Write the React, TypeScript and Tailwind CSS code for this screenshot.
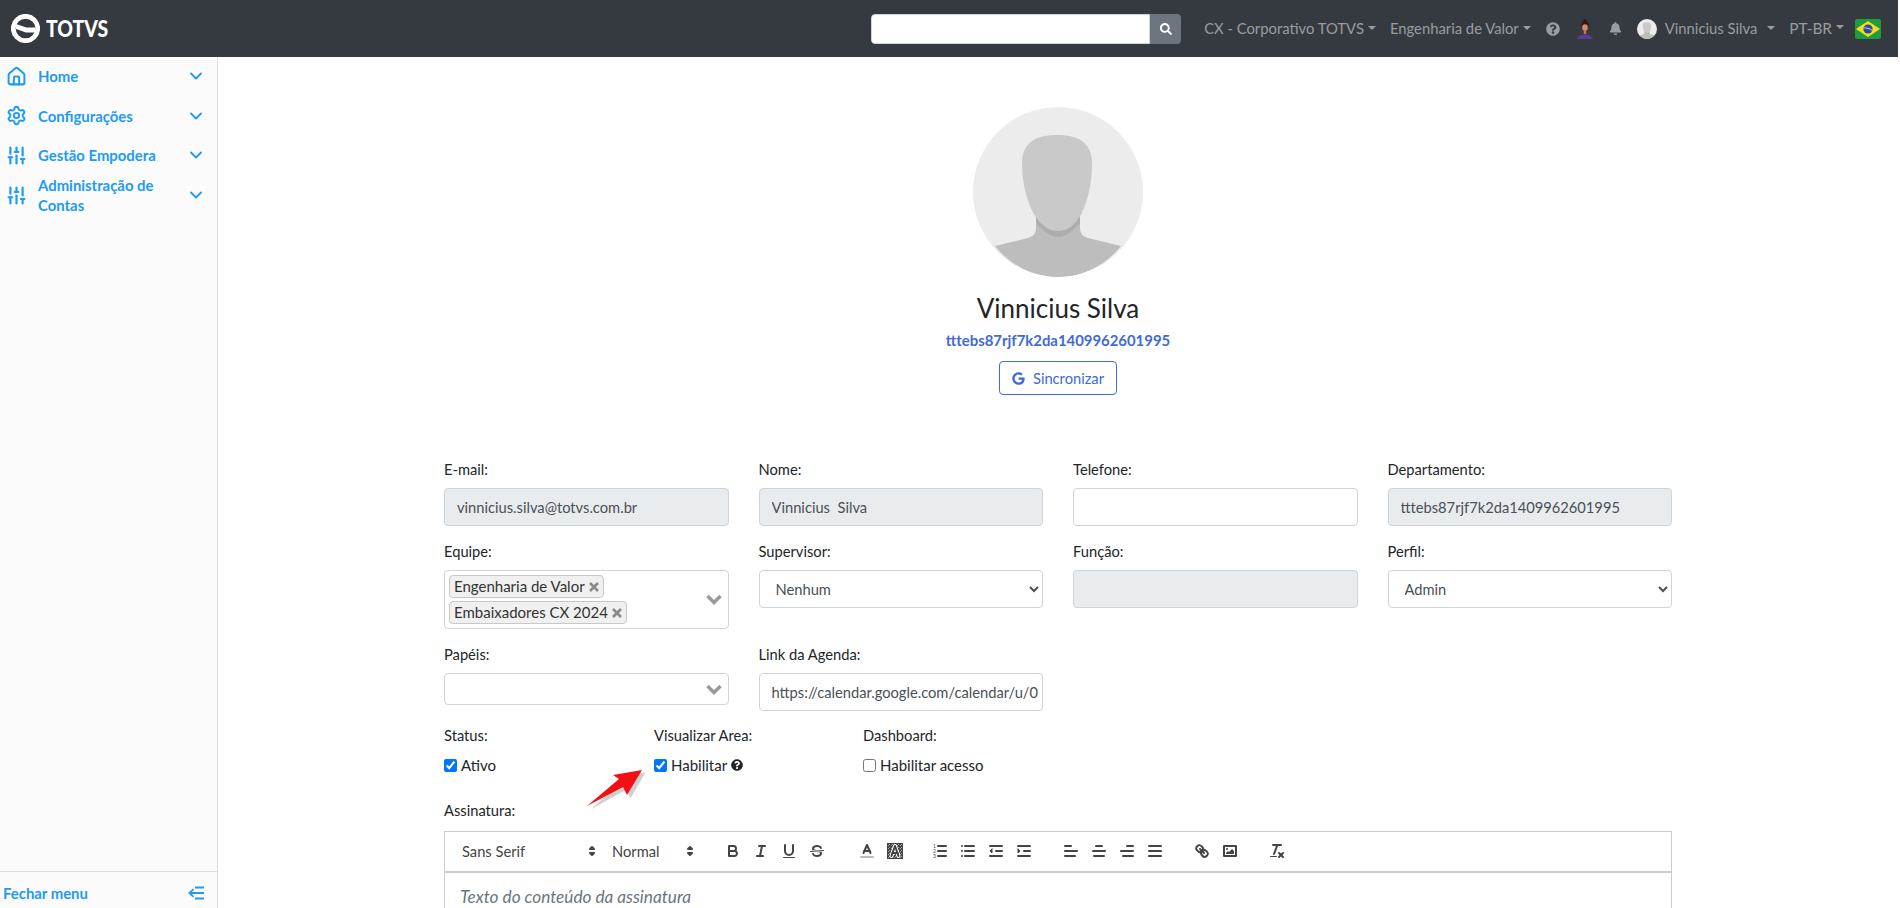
import { ReactNode } from 'react';
import { House, Settings, SlidersVertical, ChevronDown } from 'lucide-react';
import { FaBell, FaGoogle, FaQuestionCircle, FaSearch } from 'react-icons/fa';

const Caret = ({ gap = 4 }: { gap?: number }) => (
  <span
    className="inline-block border-x-[4px] border-t-[4px] border-x-transparent border-t-[#9a9da0] relative top-[-1px]"
    style={{ marginLeft: gap }}
  />
);

const Logo = () => (
  <div className="flex items-center gap-[6px] ml-[11px]">
    <svg width="29" height="29" viewBox="0 0 29 29" className="shrink-0">
      <circle cx="14.5" cy="14.5" r="12.2" fill="none" stroke="#fff" strokeWidth="4.8" />
      <path d="M5 10 L15.5 13.6 L24 13.6 L24 18.4 L15 18.4 L5 15 Z" fill="#fff" />
    </svg>
    <span className="text-white text-[22px] font-black origin-left scale-x-[0.88] [font-family:Lato,sans-serif]">TOTVS</span>
  </div>
);

const PersonIcon = () => (
  <svg width="16" height="20" viewBox="0 0 16 20" className="block">
    <circle cx="8" cy="1.8" r="1.8" fill="#2e1a1a" />
    <ellipse cx="8" cy="6" rx="3.8" ry="3.4" fill="#2e1a1a" />
    <ellipse cx="8" cy="8.4" rx="2.8" ry="3.2" fill="#d98a60" />
    <rect x="6.8" y="11" width="2.4" height="4" fill="#c87850" />
    <path d="M0 20 C1 17 4 15.5 8 15.5 C12 15.5 15 17 16 20 Z" fill="#5b3a9c" />
  </svg>
);

const Flag = () => (
  <svg width="26" height="20" viewBox="0 0 26 20" className="block rounded-[2px]">
    <rect width="26" height="20" fill="#1f9c3f" />
    <polygon points="13,2 25,10 13,18 1,10" fill="#f6dc1c" />
    <circle cx="13" cy="10" r="4.6" fill="#2b4a9b" />
    <path d="M8.6 9 C11 8.6 15 9.4 17.4 11.6" stroke="#e8edf5" strokeWidth="0.8" fill="none" />
  </svg>
);

const UserAvatar = ({ size }: { size: number }) => (
  <svg width={size} height={size} viewBox="0 0 170 170" className="block shrink-0">
    <circle cx="85" cy="85" r="85" fill="#ececec" />
    <path d="M22 139 L55 131 C61 129 63 126 63 120 L63 105 L107 105 L107 120 C107 126 109 129 115 131 L148 139 C133 158 110 170 85 170 C60 170 37 158 22 139 Z" fill="#bdbdbd" />
    <path d="M63 108 L107 108 L107 116 C100 124 92 130 85 130 C78 130 70 124 63 116 Z" fill="#adadad" />
    <path d="M84 28 C60 28 49 38 49 56 C49 88 62 124 85 124 C108 124 119 88 119 56 C119 38 108 28 84 28 Z" fill="#c9c9c9" />
  </svg>
);

const Header = () => (
  <header className="h-[57px] bg-[#343a40] flex items-center shrink-0 text-[14.8px] text-[#9a9da0]">
    <Logo />
    <div className="flex items-center ml-auto pr-[17px]">
      <div className="flex h-[30px]">
        <input className="w-[279px] bg-white rounded-l-[4px] border border-[#ced4da]" />
        <button className="w-[31px] bg-[#6c757d] rounded-r-[4px] flex items-center justify-center text-white">
          <FaSearch size={12} />
        </button>
      </div>
      <span className="ml-[23px] flex items-center">CX - Corporativo TOTVS<Caret /></span>
      <span className="ml-[14px] flex items-center">Engenharia de Valor<Caret /></span>
      <FaQuestionCircle size={14} className="ml-[15px]" />
      <span className="ml-[17px]"><PersonIcon /></span>
      <FaBell size={13} className="ml-[16px]" />
      <span className="ml-[15px]"><UserAvatar size={20} /></span>
      <span className="ml-[8px] flex items-center">Vinnicius Silva<Caret gap={10} /></span>
      <span className="ml-[14px] flex items-center text-[15.4px]">PT-BR<Caret /></span>
      <span className="ml-[11px]"><Flag /></span>
    </div>
  </header>
);

const menuItems = [
  { label: 'Home', icon: <House size={21} strokeWidth={2.3} /> },
  { label: 'Configurações', icon: <Settings size={21} strokeWidth={2.2} /> },
  { label: 'Gestão Empodera', icon: <SlidersVertical size={21} strokeWidth={2.5} /> },
  { label: 'Administração de Contas', icon: <SlidersVertical size={21} strokeWidth={2.5} /> },
];

const Sidebar = () => (
  <aside className="w-[218px] shrink-0 bg-[#fbfbfb] border-r border-[#dcdfe2] flex flex-col text-[#1d9bf5] font-bold text-[14.9px]">
    <nav className="flex-1">
      {menuItems.map(item => (
        <div key={item.label} className="h-[39.5px] flex items-center pl-[6px] pr-[11px] pb-[1.5px] last:pb-0">
          <span className="w-[32px] shrink-0">{item.icon}</span>
          <span className="flex-1 leading-[20px] pr-[14px]">{item.label}</span>
          <ChevronDown size={20} strokeWidth={2.2} />
        </div>
      ))}
    </nav>
    <div className="h-[37px] border-t border-[#dcdfe2] flex items-center justify-between pl-[3px] pr-[13px] pt-[6px]">
      <span>Fechar menu</span>
      <svg width="16" height="14" viewBox="0 0 16 14" fill="currentColor">
        <rect x="7" y="0.5" width="9" height="2" />
        <rect x="3" y="6" width="13" height="2" />
        <rect x="7" y="11.5" width="9" height="2" />
        <path d="M0 7 L5 2.5 L6.2 3.8 L2.8 7 L6.2 10.2 L5 11.5 Z" />
      </svg>
    </div>
  </aside>
);

const Field = ({ label, children }: { label: string; children: ReactNode }) => (
  <div>
    <label className="block h-[21px] leading-[21px] mb-[8px] text-[#212529]">{label}</label>
    {children}
  </div>
);

const inputBase = 'w-full h-[38px] pl-[12px] pr-[2px] border border-[#ced4da] rounded-[4px] text-[#495057] outline-none';

const TextField = ({ label, value = '', disabled = false }: { label: string; value?: string; disabled?: boolean }) => (
  <Field label={label}>
    <input readOnly value={value} className={`${inputBase} ${disabled ? 'bg-[#e9ecef]' : 'bg-white'}`} />
  </Field>
);

const SelectField = ({ label, value }: { label: string; value: string }) => (
  <Field label={label}>
    <select defaultValue={value} className={`${inputBase} bg-white`}>
      <option>{value}</option>
    </select>
  </Field>
);

const Tag = ({ text }: { text: string }) => (
  <span className="inline-flex items-center h-[23px] px-[4px] gap-[4px] bg-[#f0f0f0] border border-[#c8c8c8] rounded-[4px] text-[#333] text-[15px]">
    {text}
    <svg width="10" height="10" viewBox="0 0 10 10" stroke="#8a8a8a" strokeWidth="2.6">
      <path d="M1 1 L9 9 M9 1 L1 9" />
    </svg>
  </span>
);

const GrayChevron = () => (
  <svg width="16" height="11" viewBox="0 0 16 11" fill="none" stroke="#999" strokeWidth="3.4">
    <path d="M1.5 2 L8 8.5 L14.5 2" />
  </svg>
);

const Check = ({ label, checked = false, children }: { label: string; checked?: boolean; children?: ReactNode }) => (
  <label className="flex items-center text-[#212529] text-[15px]">
    <input type="checkbox" readOnly checked={checked} className="mr-[4px] w-[13px] h-[13px] m-0" />
    {label}
    {children}
  </label>
);

const ToolBtn = ({ children, className = '' }: { children: ReactNode; className?: string }) => (
  <span className={`w-[28px] h-[24px] px-[5px] py-[3px] shrink-0 ${className}`}>
    <svg viewBox="0 0 18 18" className="w-[18px] h-[18px]" fill="none" stroke="#444" strokeWidth="2" strokeLinecap="round" strokeLinejoin="round">
      {children}
    </svg>
  </span>
);

const PickerArrows = () => (
  <svg viewBox="0 0 18 18" className="w-[18px] h-[18px]" fill="#444" stroke="#444" strokeWidth="2" strokeLinejoin="round">
    <polygon points="7 11 9 13 11 11 7 11" />
    <polygon points="7 7 9 5 11 7 7 7" />
  </svg>
);

const Toolbar = () => (
  <div className="h-[42px] border border-[#ccc] border-b-2 flex items-center pl-[9px] text-[#444]">
    <div className="w-[147px] pl-[8px] flex items-center justify-between">
      Sans Serif
      <PickerArrows />
    </div>
    <div className="w-[95px] ml-[3px] pl-[8px] flex items-center justify-between">
      Normal
      <PickerArrows />
    </div>
    <div className="flex ml-[20px]">
      <ToolBtn>
        <path d="M5,4H9.5A2.5,2.5,0,0,1,12,6.5v0A2.5,2.5,0,0,1,9.5,9H5V4Z" />
        <path d="M5,9h5.5A2.5,2.5,0,0,1,13,11.5v0A2.5,2.5,0,0,1,10.5,14H5V9Z" />
      </ToolBtn>
      <ToolBtn>
        <line x1="7" x2="13" y1="4" y2="4" />
        <line x1="5" x2="11" y1="14" y2="14" />
        <line x1="8" x2="10" y1="14" y2="4" />
      </ToolBtn>
      <ToolBtn>
        <path d="M5,3V9a4,4,0,0,0,4,4H9a4,4,0,0,0,4-4V3" />
        <rect fill="#444" stroke="none" height="1" rx=".5" width="12" x="3" y="15" />
      </ToolBtn>
      <ToolBtn>
        <line x1="15.5" x2="2.5" y1="8.5" y2="9.5" stroke="#444" strokeWidth="1" />
        <path fill="#444" stroke="none" d="M9.007,8C6.542,7.791,6,7.519,6,6.5,6,5.792,7.283,5,9,5c1.571,0,2.765.679,2.969,1.309a1,1,0,0,0,1.9-.617C13.356,4.106,11.354,3,9,3,6.2,3,4,4.538,4,6.5a3.2,3.2,0,0,0,.5,1.843Z" />
        <path fill="#444" stroke="none" d="M8.984,10C11.457,10.208,12,10.479,12,11.5c0,.708-1.283,1.5-3,1.5-1.571,0-2.765-.679-2.969-1.309a1,1,0,1,0-1.9.617C4.644,13.894,6.646,15,9,15c2.8,0,5-1.538,5-3.5a3.2,3.2,0,0,0-.5-1.843Z" />
      </ToolBtn>
    </div>
    <div className="flex ml-[22px]">
      <ToolBtn>
        <line x1="3" x2="15" y1="15" y2="15" stroke="#bbb" />
        <polyline points="5.5 11 9 3 12.5 11" />
        <line x1="11.63" x2="6.38" y1="9" y2="9" />
      </ToolBtn>
      <ToolBtn>
        <defs>
          <pattern id="dither" width="3" height="3" patternUnits="userSpaceOnUse">
            <rect width="1" height="1" fill="#555" />
            <rect x="1.5" y="1.5" width="1" height="1" fill="#555" />
          </pattern>
        </defs>
        <rect x="1" y="1" width="16" height="16" fill="url(#dither)" stroke="none" />
        <polyline points="5.5 14 9 4 12.5 14" stroke="#fff" strokeWidth="4" />
        <polyline points="5.5 14 9 4 12.5 14" />
        <line x1="11.63" x2="6.38" y1="11" y2="11" />
      </ToolBtn>
    </div>
    <div className="flex ml-[17px]">
      <ToolBtn>
        <line x1="7" x2="15" y1="4" y2="4" />
        <line x1="7" x2="15" y1="9" y2="9" />
        <line x1="7" x2="15" y1="14" y2="14" />
        <text x="2" y="6" fontSize="5" fill="#444" stroke="none">1</text>
        <text x="2" y="11" fontSize="5" fill="#444" stroke="none">2</text>
        <text x="2" y="16" fontSize="5" fill="#444" stroke="none">3</text>
      </ToolBtn>
      <ToolBtn>
        <line x1="6" x2="15" y1="4" y2="4" />
        <line x1="6" x2="15" y1="9" y2="9" />
        <line x1="6" x2="15" y1="14" y2="14" />
        <line x1="3" x2="3" y1="4" y2="4" />
        <line x1="3" x2="3" y1="9" y2="9" />
        <line x1="3" x2="3" y1="14" y2="14" />
      </ToolBtn>
      <ToolBtn>
        <line x1="3" x2="15" y1="14" y2="14" />
        <line x1="3" x2="15" y1="4" y2="4" />
        <line x1="9" x2="15" y1="9" y2="9" />
        <polyline fill="#444" stroke="#444" strokeWidth="1" points="5 7 5 11 3 9 5 7" />
      </ToolBtn>
      <ToolBtn>
        <line x1="3" x2="15" y1="14" y2="14" />
        <line x1="3" x2="15" y1="4" y2="4" />
        <line x1="9" x2="15" y1="9" y2="9" />
        <polyline fill="#444" stroke="#444" strokeWidth="1" points="3 7 3 11 5 9 3 7" />
      </ToolBtn>
    </div>
    <div className="flex ml-[19px]">
      <ToolBtn>
        <line x1="3" x2="15" y1="9" y2="9" />
        <line x1="3" x2="13" y1="14" y2="14" />
        <line x1="3" x2="9" y1="4" y2="4" />
      </ToolBtn>
      <ToolBtn>
        <line x1="15" x2="3" y1="9" y2="9" />
        <line x1="14" x2="4" y1="14" y2="14" />
        <line x1="12" x2="6" y1="4" y2="4" />
      </ToolBtn>
      <ToolBtn>
        <line x1="15" x2="3" y1="9" y2="9" />
        <line x1="15" x2="5" y1="14" y2="14" />
        <line x1="15" x2="9" y1="4" y2="4" />
      </ToolBtn>
      <ToolBtn>
        <line x1="15" x2="3" y1="9" y2="9" />
        <line x1="15" x2="3" y1="14" y2="14" />
        <line x1="15" x2="3" y1="4" y2="4" />
      </ToolBtn>
    </div>
    <div className="flex ml-[19px]">
      <ToolBtn>
        <line x1="7" x2="11" y1="7" y2="11" />
        <path d="M8.9,4.577a3.476,3.476,0,0,1,.36,4.679A3.476,3.476,0,0,1,4.577,8.9C3.185,7.5,2.035,6.4,4.217,4.217S7.5,3.185,8.9,4.577Z" />
        <path d="M13.423,9.1a3.476,3.476,0,0,0-4.679-.36,3.476,3.476,0,0,0,.36,4.679c1.392,1.392,2.5,2.542,4.679.36S14.815,10.5,13.423,9.1Z" />
      </ToolBtn>
      <ToolBtn>
        <rect height="10" width="12" x="3" y="4" />
        <circle cx="6" cy="7" r="1" fill="#444" stroke="none" />
        <polyline fill="#444" stroke="none" points="5 12 5 11 7 9 8 10 11 7 13 9 13 12 5 12" />
      </ToolBtn>
    </div>
    <div className="flex ml-[19px]">
      <ToolBtn>
        <line x1="5" x2="13" y1="3" y2="3" />
        <line x1="6" x2="9.35" y1="12" y2="3" />
        <line x1="11" x2="15" y1="11" y2="15" />
        <line x1="15" x2="11" y1="11" y2="15" />
        <rect fill="#444" stroke="none" height="1" rx=".5" width="7" x="2" y="14" />
      </ToolBtn>
    </div>
  </div>
);

const RedArrow = () => (
  <svg width="66" height="46" viewBox="0 0 66 46" className="absolute left-[141px] top-[309px]">
    <polygon points="4,40 36,12 30,8 59,3 44,29 40,20" fill="#00000030" transform="translate(1.5,1.5)" />
    <polygon points="2,38 34,11 28,7 57,2 42,27 38,19" fill="#f40f14" />
  </svg>
);

const Content = () => (
  <main className="flex-1 bg-white overflow-hidden">
    <div className="flex flex-col items-center pt-[50px]">
      <UserAvatar size={170} />
      <h4 className="mt-[15px] h-[32px] leading-[32px] text-[26px] text-[#212529]">Vinnicius Silva</h4>
      <a className="mt-[6px] h-[21px] leading-[21px] font-bold text-[14.9px] text-[#3f6ad8]">tttebs87rjf7k2da1409962601995</a>
      <button className="mt-[10px] w-[118px] h-[34px] border border-[#3f6ad8] rounded-[4px] text-[#3f6ad8] flex items-center justify-center gap-[8px]">
        <FaGoogle size={13} />
        Sincronizar
      </button>
      <div className="relative w-[1228px] mt-[64px]">
        <div className="grid grid-cols-4 gap-x-[30px] gap-y-[15px] items-start">
          <TextField label="E-mail:" value="vinnicius.silva@totvs.com.br" disabled />
          <TextField label="Nome:" value="Vinnicius  Silva" disabled />
          <TextField label="Telefone:" />
          <TextField label="Departamento:" value="tttebs87rjf7k2da1409962601995" disabled />
          <Field label="Equipe:">
            <div className="h-[59px] border border-[#ced4da] rounded-[4px] bg-white flex items-center pl-[4px] pr-[6px]">
              <div className="flex-1 flex flex-col items-start gap-[3px]">
                <Tag text="Engenharia de Valor" />
                <Tag text="Embaixadores CX 2024" />
              </div>
              <GrayChevron />
            </div>
          </Field>
          <SelectField label="Supervisor:" value="Nenhum" />
          <TextField label="Função:" disabled />
          <SelectField label="Perfil:" value="Admin" />
          <Field label="Papéis:">
            <div className="h-[32px] border border-[#ced4da] rounded-[4px] bg-white flex items-center justify-end pr-[6px]">
              <GrayChevron />
            </div>
          </Field>
          <TextField label="Link da Agenda:" value="https://calendar.google.com/calendar/u/0" />
        </div>
        <div className="flex mt-[14px]">
          <div className="w-[210px]">
            <p className="h-[21px] leading-[21px] mb-[8px] text-[#212529]">Status:</p>
            <Check label="Ativo" checked />
          </div>
          <div className="w-[209px]">
            <p className="h-[21px] leading-[21px] mb-[8px] text-[#212529]">Visualizar Area:</p>
            <Check label="Habilitar" checked>
              <FaQuestionCircle size={12} className="ml-[4px] text-[#212529]" />
            </Check>
          </div>
          <div>
            <p className="h-[21px] leading-[21px] mb-[8px] text-[#212529]">Dashboard:</p>
            <Check label="Habilitar acesso" />
          </div>
        </div>
        <p className="h-[21px] leading-[21px] mt-[23px] mb-[10px] text-[#212529]">Assinatura:</p>
        <Toolbar />
        <div className="h-[200px] border-x border-[#ccc] px-[15px] pt-[11px] italic text-[17.2px] text-[#6c757d]">
          Texto do conteúdo da assinatura
        </div>
        <RedArrow />
      </div>
    </div>
  </main>
);

export default function App() {
  return (
    <div className="h-[908px] w-full overflow-hidden flex flex-col bg-white text-[14.7px] [font-family:Lato,sans-serif] pr-[2px]">
      <Header />
      <div className="flex flex-1 min-h-0">
        <Sidebar />
        <Content />
      </div>
    </div>
  );
}
